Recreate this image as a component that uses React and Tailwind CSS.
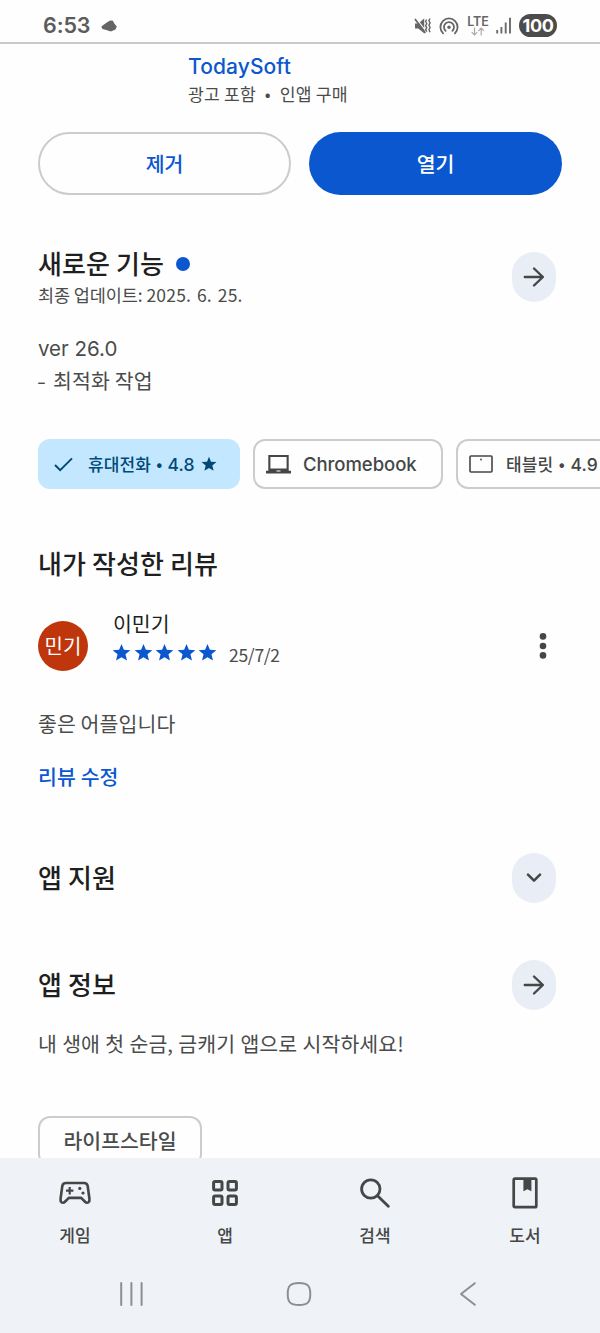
import React from "react";

const STAR = "M12 1.2l3 7.3 8.2.6-6.2 5.2 1.9 7.9L12 18l-6.9 4.2 1.9-7.9L.8 9.1l8.2-.6z";

function Star({ className }) {
  return (
    <svg viewBox="0 0 24 24" className={className} fill="currentColor">
      <path d={STAR} />
    </svg>
  );
}

function StatusBar() {
  return (
    <header className="flex h-[44px] shrink-0 items-center border-b-2 border-[#c9c9c9] pt-[8px] pl-[43px] text-[#5b5b5b]">
      <span className="w-[58px] font-['Inter'] text-[21.5px] leading-[30px] font-semibold tracking-[-0.1px]">6:53</span>
      <svg width="16" height="12" viewBox="0 0 16 12" className="mt-[2px]" fill="#656565">
        <path d="M0.3 6.8C2.5 4.6 5 3.2 7 1.7C8.5 0.5 10.5.2 12 .9L13.3 3.5L15.8 6.5L14.5 9.4L9.8 11.4L5.2 10.1L1.5 9.1Z" />
      </svg>
      <svg width="18" height="18" viewBox="0 0 18 18" className="mt-[1px] ml-[297px]" fill="none" stroke="#666" strokeWidth="1.5">
        <path d="M1 6.4H4.2L10.2 1.6V16.2L4.2 11.5H1Z" fill="#666" stroke="none" />
        <path d="M2.2 1.4L12.4 14.8" stroke="#fff" strokeWidth="1.2" />
        <path d="M1 2L11.3 16" strokeWidth="1.8" />
        <path d="M12.6 2.5l-1 2 1.2 2-1.2 2.2 1.2 2-1.2 2 1.2 2M16 1.5l-1.1 2.2 1.2 2.2-1.2 2.3 1.2 2.3-1.2 2.2 1.2 2.5" strokeWidth="1.4" />
      </svg>
      <svg width="20" height="18" viewBox="0 0 20 18" className="mt-[1px] ml-[7px]" fill="none" stroke="#666" strokeWidth="1.8" strokeLinecap="round">
        <path d="M4.1 16.3A8.6 8.6 0 1 1 15.9 16.3" />
        <path d="M6.6 13.8A5 5 0 1 1 13.4 13.8" />
        <circle cx="10" cy="10.3" r="1.7" fill="#666" stroke="none" />
      </svg>
      <div className="mt-[1px] ml-[8px] flex w-[22px] flex-col items-center">
        <span className="font-['Inter'] text-[12.5px] leading-[11px] font-semibold text-[#666]">LTE</span>
        <svg width="14" height="9" viewBox="0 0 14 9" fill="none" stroke="#aaa" strokeWidth="1.2">
          <path d="M3.5 0.5V8M.7 5.2L3.5 8L6.3 5.2M10.2 8.5V1M7.4 3.8L10.2 1L13 3.8" />
        </svg>
      </div>
      <svg width="16" height="17" viewBox="0 0 16 17" className="mt-[1px] ml-[7px]" stroke="#6c6c6c" strokeWidth="1.9">
        <path d="M1.2 13V16.5M5.4 10V16.5M9.7 5.5V16.5M14 .7V16.5" />
      </svg>
      <span className="mt-[1px] ml-[7px] flex h-[23px] w-[38px] items-center justify-center rounded-full bg-[#4c4c4c] font-['Inter'] text-[18px] leading-none font-bold tracking-[-0.3px] text-white">100</span>
    </header>
  );
}

function ArrowRight() {
  return (
    <svg width="22" height="22" viewBox="0 0 22 22" fill="none" stroke="#444746" strokeWidth="2.4">
      <path d="M1.8 11H19.8M11 2.5L19.9 11L11 19.5" strokeLinecap="round" strokeLinejoin="round" />
    </svg>
  );
}

function RoundButton({ children }) {
  return (
    <button className="flex h-[50px] w-[44px] shrink-0 items-center justify-center rounded-full bg-[#e8edf6]">
      {children}
    </button>
  );
}

function SectionTitle({ children }) {
  return <h2 className="text-[26px] leading-[36px] font-medium tracking-[0.1px] text-[#1f1f1f]">{children}</h2>;
}

function DeviceChips() {
  return (
    <div className="mt-[43px] flex h-[50px] w-[562px] shrink-0 gap-[13px] overflow-hidden text-[17px] font-medium whitespace-nowrap text-[#444746]">
      <div className="flex w-[202px] shrink-0 items-center rounded-[12px] bg-[#c2e7ff] pl-[16px] text-[#004a77]">
        <svg width="19" height="15" viewBox="0 0 19 15" fill="none" stroke="currentColor" strokeWidth="2">
          <path d="M1 8L6.2 13.2L18 1.4" />
        </svg>
        <span className="mt-[1px] ml-[15px] tracking-[0.15px]">휴대전화<span className="mx-[5px]">•</span><span className="font-['Inter'] text-[17.5px]">4.8</span></span>
        <Star className="ml-[6px] size-[16px]" />
      </div>
      <div className="flex w-[190px] shrink-0 items-center rounded-[12px] border-2 border-[#cccccc] pl-[11px]">
        <svg width="25" height="19" viewBox="0 0 25 19" fill="#444746">
          <path fillRule="evenodd" d="M2.3 0H22.7V15.7H25V18.5H0V15.7H2.3ZM4.4 2.1V13.5H20.6V2.1ZM10.5 15.5V16.4H14.5V15.5Z" />
        </svg>
        <span className="mt-[1px] ml-[12px] font-['Inter'] text-[18.5px] tracking-[-0.05px]">Chromebook</span>
      </div>
      <div className="flex w-[210px] shrink-0 items-center rounded-[12px] border-2 border-[#cccccc] pl-[11px]">
        <svg width="24" height="18" viewBox="0 0 24 18" fill="none" stroke="#444746" strokeWidth="1.6">
          <rect x="1" y="1" width="22" height="16" rx="1" />
          <circle cx="12" cy="4.5" r="0.9" fill="#444746" stroke="none" />
        </svg>
        <span className="mt-[1px] ml-[13px] tracking-[0.1px]">태블릿<span className="mx-[5.5px]">•</span><span className="font-['Inter'] text-[17.5px]">4.9</span></span>
      </div>
    </div>
  );
}

function GameIcon() {
  return (
    <svg width="32" height="24" viewBox="0 0 32 24" fill="none" stroke="#444746" strokeWidth="2.6" strokeLinejoin="round">
      <path d="M7 2H25Q28.1 2 28.7 5L30.4 17.5Q30.8 21.8 28.2 21.8Q27 21.8 25.8 20.5L22.2 16.9H9.8L6.2 20.5Q5 21.8 3.8 21.8Q1.2 21.8 1.6 17.5L3.3 5Q3.9 2 7 2Z" />
      <path d="M10.7 6V13.4M7 9.7H14.4" strokeWidth="2.2" />
      <circle cx="20.8" cy="7.4" r="1.6" fill="#444746" stroke="none" />
      <circle cx="24" cy="12" r="1.6" fill="#444746" stroke="none" />
    </svg>
  );
}

function AppsIcon() {
  return (
    <svg width="26" height="26" viewBox="0 0 26 26" fill="none" stroke="#444746" strokeWidth="3">
      <rect x="1.6" y="1.6" width="8.4" height="8.4" rx="1.5" />
      <rect x="16" y="1.6" width="8.4" height="8.4" rx="1.5" />
      <rect x="1.6" y="16" width="8.4" height="8.4" rx="1.5" />
      <rect x="16" y="16" width="8.4" height="8.4" rx="1.5" />
    </svg>
  );
}

function SearchIcon() {
  return (
    <svg width="30" height="30" viewBox="0 0 30 30" fill="none" stroke="#444746" strokeWidth="2.8" strokeLinecap="round">
      <circle cx="10.8" cy="11" r="9.2" />
      <path d="M17.8 18L28.3 28.3" />
    </svg>
  );
}

function BookIcon() {
  return (
    <svg width="26" height="32" viewBox="0 0 26 32" fill="none" stroke="#444746" strokeWidth="2.7">
      <rect x="1.7" y="1.7" width="22.6" height="28.4" rx="1.2" />
      <path d="M11.4 2H19.4V14.2L15.4 12.2L11.4 14.2Z" fill="#444746" stroke="none" />
    </svg>
  );
}

const TABS = [
  { label: "게임", Icon: GameIcon },
  { label: "앱", Icon: AppsIcon },
  { label: "검색", Icon: SearchIcon },
  { label: "도서", Icon: BookIcon },
];

function BottomBar() {
  return (
    <footer className="h-[175px] shrink-0 bg-[#eff2f7]">
      <nav className="grid grid-cols-4">
        {TABS.map(({ label, Icon }) => (
          <div key={label} className="flex flex-col items-center">
            <span className="mt-[17px] flex h-[35px] items-center">
              <Icon />
            </span>
            <span className="mt-[13px] text-[17px] leading-[24px] font-medium text-[#444746]">{label}</span>
          </div>
        ))}
      </nav>
      <div className="mt-[34px] flex items-center pl-[119px]">
        <svg width="24" height="26" viewBox="0 0 24 26" stroke="#8c8e92" strokeWidth="2" strokeLinecap="round">
          <path d="M2.2 2V24M12.4 2V24M22.6 2V24" />
        </svg>
        <svg width="26" height="26" viewBox="0 0 26 26" className="ml-[143px]" fill="none" stroke="#8c8e92" strokeWidth="2">
          <path d="M13 2C21.5 2 24.3 4.6 24.3 13S21.5 24 13 24S1.7 21.4 1.7 13S4.5 2 13 2Z" />
        </svg>
        <svg width="18" height="26" viewBox="0 0 18 26" className="ml-[147px]" fill="none" stroke="#8c8e92" strokeWidth="2" strokeLinecap="round" strokeLinejoin="round">
          <path d="M15.8 2.2L2 13L15.8 23.8" />
        </svg>
      </div>
    </footer>
  );
}

export default function App() {
  return (
    <div className="flex h-[1333px] w-[600px] flex-col overflow-hidden bg-[#fefefe] font-['Noto_Sans_CJK_KR',sans-serif] text-[#4a4c4b]">
      <StatusBar />
      <main className="flex h-[1114px] shrink-0 flex-col overflow-hidden pl-[38px]">
        <div className="mt-[9px] pl-[150px]">
          <p className="font-['Inter'] text-[21px] leading-[28px] font-medium tracking-[0.1px] text-[#0b57d0]">TodaySoft</p>
          <p className="mb-[2px] text-[17.2px] leading-[25px] tracking-[0.15px]">광고 포함<span className="mx-[9px]">•</span>인앱 구매</p>
        </div>
        <div className="mt-[24px] flex shrink-0 gap-[18px] text-[20.5px] font-medium">
          <button className="h-[63px] w-[253px] rounded-full border-2 border-[#cccccc] text-[#0b57d0]">제거</button>
          <button className="h-[63px] w-[253px] rounded-full bg-[#0b57d0] text-white">열기</button>
        </div>
        <div className="mt-[50px] flex w-[518px] shrink-0 justify-between">
          <div>
            <div className="flex items-center gap-[12px]">
              <SectionTitle>새로운 기능</SectionTitle>
              <span className="mt-[1px] h-[14px] w-[14px] rounded-full bg-[#0b57d0]" />
            </div>
            <p className="mt-[1px] text-[17.5px] leading-[26px] tracking-[-0.1px]">최종 업데이트: <span className="tracking-[0.2px] [word-spacing:1.7px]">2025. 6. 25.</span></p>
          </div>
          <div className="mt-[7px]"><RoundButton><ArrowRight /></RoundButton></div>
        </div>
        <p className="mt-[25px] font-['Inter'] text-[20.5px] leading-[32px]">ver 26.0</p>
        <p className="text-[20.5px] leading-[31px] tracking-[0.15px]"><span className="mr-[3px] inline-block scale-x-125">-</span> 최적화 작업</p>
        <DeviceChips />
        <div className="mt-[56px]"><SectionTitle>내가 작성한 리뷰</SectionTitle></div>
        <div className="mt-[28px] flex h-[62px] w-[562px] shrink-0">
          <span className="mt-[12px] flex size-[50px] shrink-0 items-center justify-center rounded-full bg-[#bf360c] text-[20px] text-white">민기</span>
          <div className="ml-[24px] w-[428px]">
            <p className="pl-[1px] text-[20.5px] leading-[28px] text-[#1f1f1f]">이민기</p>
            <div className="flex items-center text-[#0b57d0]">
              <div className="mb-[2px] flex gap-[2.5px]">
                {[0, 1, 2, 3, 4].map((i) => (
                  <Star key={i} className="size-[19px]" />
                ))}
              </div>
              <span className="mt-[4px] ml-[12px] text-[17.5px] leading-[28px] tracking-[-0.3px] text-[#4a4c4b]">25/7/2</span>
            </div>
          </div>
          <svg width="10" height="28" viewBox="0 0 10 28" className="mt-[23px] ml-[-2px]" fill="#444746">
            <circle cx="5" cy="4.4" r="3.3" />
            <circle cx="5" cy="14" r="3.3" />
            <circle cx="5" cy="23.4" r="3.3" />
          </svg>
        </div>
        <p className="mt-[36px] text-[20.5px] leading-[32px] tracking-[0.1px]">좋은 어플입니다</p>
        <p className="mt-[21px] text-[20.5px] leading-[32px] font-medium tracking-[0.1px] text-[#0b57d0]">리뷰 수정</p>
        <div className="mt-[61px] flex w-[518px] shrink-0 items-center justify-between">
          <div className="mb-[3px]"><SectionTitle>앱 지원</SectionTitle></div>
          <RoundButton>
            <svg width="16" height="10" viewBox="0 0 16 10" fill="none" stroke="#444746" strokeWidth="2.5" strokeLinecap="round" strokeLinejoin="round">
              <path d="M2 1.7L8 7.7L14 1.7" />
            </svg>
          </RoundButton>
        </div>
        <div className="mt-[57px] flex w-[518px] shrink-0 items-center justify-between">
          <div className="mb-[3px]"><SectionTitle>앱 정보</SectionTitle></div>
          <RoundButton><ArrowRight /></RoundButton>
        </div>
        <p className="mt-[17px] text-[20.5px] leading-[32px] tracking-[0.1px] [word-spacing:0.5px]">내 생애 첫 순금, 금캐기 앱으로 시작하세요!</p>
        <div className="mt-[57px] flex h-[50px] w-[164px] shrink-0 items-center justify-center rounded-[12px] border-2 border-[#cccccc] pb-[1px] text-[20.5px] font-medium">라이프스타일</div>
      </main>
      <BottomBar />
    </div>
  );
}
